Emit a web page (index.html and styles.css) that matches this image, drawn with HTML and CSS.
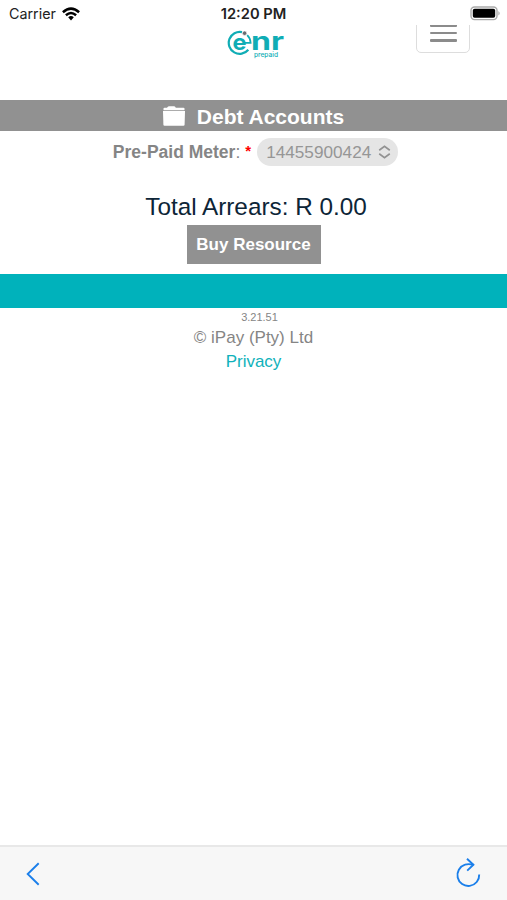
FILE: index.html
```html
<!DOCTYPE html>
<html lang="en">
<head>
    <meta charset="UTF-8" />
    <meta name="viewport" content="width=device-width, initial-scale=1.0" />
    <title>Debt Accounts</title>
    <link rel="stylesheet" href="styles.css">
</head>

<body>
    <div class="status-bar">
        <div class="carrier">
            <span>Carrier</span>
            <svg class="wifi" width="18" height="14" viewBox="0 0 18 14" fill="none" stroke="#000" stroke-width="2.5">
                <path d="M0.9 5.2 Q9 -2 17.1 5.2" />
                <path d="M3.9 8.3 Q9 3.8 14.1 8.3" />
                <path d="M6.2 10.2 Q9 8 11.8 10.2 L9 13.4 Z" fill="#000" stroke="none" />
            </svg>
        </div>
        <div class="time">12:20 PM</div>
        <svg class="battery" width="31" height="15" viewBox="0 0 31 15">
            <rect x="1" y="1" width="26" height="12.6" rx="3.5" fill="#fff" stroke="#aaa" stroke-width="1.4" />
            <rect x="2.8" y="2.8" width="22.4" height="9" rx="1.8" fill="#000" />
            <path d="M28.4 5 Q31 7.3 28.4 9.6 Z" fill="#aaa" />
        </svg>
    </div>

    <header>
        <svg class="logo" width="58" height="36" viewBox="0 0 58 36">
            <path d="M15 4.1 A11 11 0 1 0 21.3 21.8" fill="none" stroke="#10adb5" stroke-width="2.2" />
            <path d="M20.2 7.2 A11 11 0 0 1 23.6 14.8 H17" fill="none" stroke="#10adb5" stroke-width="1.8" />
            <text class="logo-e" x="5.6" y="21.8" textLength="14" lengthAdjust="spacingAndGlyphs">e</text>
            <text class="logo-nr" x="24" y="22.4" textLength="33" lengthAdjust="spacingAndGlyphs">nr</text>
            <circle cx="17.6" cy="5.2" r="2.2" fill="#686b70" stroke="#fff" stroke-width="0.6" />
            <text class="logo-sub" x="27" y="29.2" textLength="24" lengthAdjust="spacingAndGlyphs">prepaid</text>
        </svg>
        <button class="menu-button" aria-label="Menu">
            <span></span>
            <span></span>
            <span></span>
        </button>
    </header>

    <main>
        <h1>
            <svg width="22" height="20" viewBox="0 0 22 20" fill="#fff">
                <path d="M0.5 4.2 V2.6 Q0.5 1.7 1.5 1.7 H4 Q5 0.3 6.3 0.3 H10.8 Q12.2 0.3 12.8 1.7 H20.5 Q21.5 1.7 21.5 2.6 V4.2 Z" />
                <path d="M0 5.1 H22 L21.6 18.7 Q21.5 19.7 20.5 19.7 H1.5 Q0.5 19.7 0.4 18.7 Z" />
            </svg>
            <span>Debt Accounts</span>
        </h1>

        <div class="meter-row">
            <label><b>Pre-Paid Meter</b>:</label>
            <span class="required">*</span>
            <div class="meter-select">
                <span>14455900424</span>
                <svg width="13" height="14" viewBox="0 0 13 14" fill="none" stroke="#929292" stroke-width="1.7">
                    <path d="M1.2 5.2 L6.5 1.4 L11.8 5.2" />
                    <path d="M1.2 8.8 L6.5 12.6 L11.8 8.8" />
                </svg>
            </div>
        </div>

        <p class="total">Total Arrears: R 0.00</p>
        <button class="buy-button">Buy Resource</button>
    </main>

    <footer>
        <div class="footer-bar"></div>
        <div class="version">3.21.51</div>
        <div class="copyright">© iPay (Pty) Ltd</div>
        <a href="#" class="privacy">Privacy</a>
    </footer>

    <nav class="toolbar">
        <svg width="14" height="24" viewBox="0 0 14 24" fill="none" stroke="#1b7fea" stroke-width="1.9">
            <path d="M12.7 1.2 L1.7 12 L12.7 22.8" />
        </svg>
        <svg width="25" height="30" viewBox="0 0 25 30" fill="none" stroke="#1b7fea" stroke-width="1.9">
            <path d="M17.5 5.7 C14 5 11.6 4.8 9 5.7 A10.9 10.9 0 1 0 23.2 15.5" />
            <path d="M11 -0.2 L17.4 5.7 L11.2 11.6" />
        </svg>
    </nav>
</body>
</html>
```
FILE: styles.css
```css
body {
    margin: 0;
    height: 100vh;
    display: flex;
    flex-direction: column;
    font-family: "Liberation Sans", Arial, sans-serif;
    background-color: #fff;
    color: #858585;
    overflow: hidden;
}

/* --- status bar --- */
.status-bar {
    display: grid;
    grid-template-columns: 1fr auto 1fr;
    align-items: center;
    height: 25px;
    padding: 0 6px 0 9px;
    box-sizing: border-box;
    font-family: Inter, sans-serif;
    color: #222;
}

.carrier {
    display: flex;
    align-items: center;
    gap: 6px;
    font-size: 14.3px;
    line-height: 26px;
}

.wifi {
    margin-top: -1px;
}

.time {
    margin-right: 3px;
    font-size: 14.7px;
    font-weight: 600;
    line-height: 28px;
}

.battery {
    justify-self: end;
    margin-top: -1px;
}

/* --- header --- */
header {
    display: grid;
    grid-template-columns: 1fr auto 1fr;
    align-items: start;
    height: 75px;
    overflow: hidden;
}

.logo {
    grid-column: 2;
    margin: 3px 0 0 5px;
}

.logo text {
    font-family: Inter, sans-serif;
    font-weight: 700;
    fill: #10adb5;
}

.logo .logo-e {
    font-size: 22px;
}

.logo .logo-nr {
    font-size: 25px;
}

.logo .logo-sub {
    font-size: 6.5px;
    font-weight: 500;
}

.menu-button {
    justify-self: end;
    display: flex;
    flex-direction: column;
    align-items: center;
    gap: 5px;
    width: 54px;
    height: 42px;
    margin: -14px 37px 0 0;
    padding: 12px 0 0;
    box-sizing: border-box;
    background-color: #fff;
    border: 1px solid #ddd;
    border-radius: 5px;
}

.menu-button span {
    width: 27px;
    height: 2.5px;
    background-color: #8b8b8b;
    border-radius: 1px;
}

/* --- content --- */
main {
    display: flex;
    flex-direction: column;
    align-items: center;
}

h1 {
    display: flex;
    align-items: center;
    justify-content: center;
    gap: 12px;
    width: 100%;
    height: 31px;
    margin: 0;
    font-size: 21px;
    background-color: #919191;
    color: #fff;
}

h1 span {
    padding-top: 3px;
}

.meter-row {
    display: flex;
    align-items: center;
    height: 28px;
    margin: 7px 0 0 4px;
    font-size: 17.5px;
}

.required {
    margin: 0 6px 4px 5px;
    font-size: 15px;
    font-weight: bold;
    color: #f00;
}

.meter-select {
    display: flex;
    align-items: center;
    justify-content: space-between;
    width: 141px;
    height: 28px;
    padding: 0 7px 0 9px;
    box-sizing: border-box;
    background-color: #e5e5e5;
    border-radius: 14px;
    font-size: 17.2px;
    color: #969696;
}

.total {
    margin: 25px 0 0 5px;
    font-size: 24.3px;
    line-height: 32px;
    color: #0d2537;
}

.buy-button {
    width: 134px;
    height: 39px;
    margin: 2px 0 10px;
    padding: 0;
    font-family: inherit;
    font-size: 17px;
    font-weight: bold;
    color: #fff;
    background-color: #919191;
    border: none;
}

/* --- footer --- */
footer {
    display: flex;
    flex-direction: column;
    align-items: center;
}

.footer-bar {
    width: 100%;
    height: 34px;
    background-color: #00b2bb;
}

.version {
    margin-left: 12px;
    font-size: 11px;
    line-height: 18px;
}

.copyright {
    font-size: 17px;
    line-height: 24px;
}

.privacy {
    font-size: 17px;
    line-height: 24px;
    color: #10b2bb;
    text-decoration: none;
}

.toolbar {
    display: flex;
    align-items: center;
    justify-content: space-between;
    height: 55px;
    margin-top: auto;
    padding: 0 26px;
    box-sizing: border-box;
    background-color: #f7f7f7;
    border-top: 2px solid #e8e8e8;
}

.toolbar svg {
    overflow: visible;
}
```
